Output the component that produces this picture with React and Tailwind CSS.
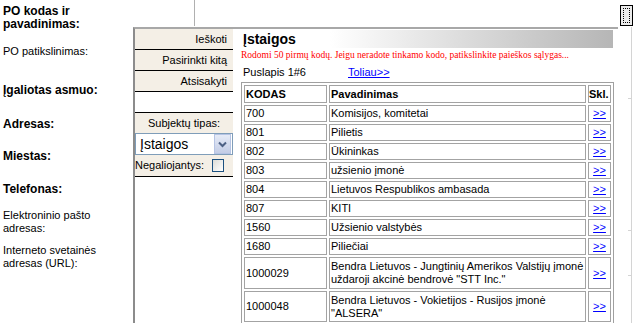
import React from 'react';

const rows = [
    { code: '700', name: 'Komisijos, komitetai' },
    { code: '801', name: 'Pilietis' },
    { code: '802', name: 'Ūkininkas' },
    { code: '803', name: 'užsienio įmonė' },
    { code: '804', name: 'Lietuvos Respublikos ambasada' },
    { code: '807', name: 'KITI' },
    { code: '1560', name: 'Užsienio valstybės' },
    { code: '1680', name: 'Piliečiai' },
    { code: '1000029', name: ['Bendra Lietuvos - Jungtinių Amerikos Valstijų įmonė', 'uždaroji akcinė bendrovė "STT Inc."'], h: 'h-[32px]' },
    { code: '1000048', name: ['Bendra Lietuvos - Vokietijos - Rusijos įmonė', '"ALSERA"'], h: 'h-[31px]' },
];

const SideButton = ({ label }) => (
    <div className="h-[21px] bg-[#f4efe6] border-b border-black flex items-center justify-end pr-[6px] text-[11px]">
        {label}
    </div>
);

const App = () => {
    return (
        <div className="relative w-[634px] h-[323px] overflow-hidden bg-white text-black font-['Liberation_Sans',Arial,sans-serif]">
            {/* underlying form labels */}
            <div className="pl-[3px] pt-[5px] w-[130px]">
                <div className="font-bold text-[12px] leading-[13px]">PO kodas ir<br />pavadinimas:</div>
                <div className="mt-[14px] text-[11px] leading-[13px]">PO patikslinimas:</div>
                <div className="mt-[26px] font-bold text-[12px] leading-[13px]">Įgaliotas asmuo:</div>
                <div className="mt-[21px] font-bold text-[12px] leading-[13px]">Adresas:</div>
                <div className="mt-[19px] font-bold text-[12px] leading-[13px]">Miestas:</div>
                <div className="mt-[20px] font-bold text-[12px] leading-[13px]">Telefonas:</div>
                <div className="mt-[13px] text-[11px] leading-[13px]">Elektroninio pašto<br />adresas:</div>
                <div className="mt-[9px] text-[11px] leading-[13px]">Interneto svetainės<br />adresas (URL):</div>
            </div>

            {/* edges of the form fields behind the popup */}
            <div className="absolute left-[194px] top-0 w-px h-[26px] bg-[#b0b0b0]" />
            <div className="absolute left-[631px] top-[27px] w-px h-[296px] bg-[#d4d4d4]" />
            <div className="absolute left-[628px] top-[98px] w-[3px] h-px bg-[#d4d4d4]" />
            <div className="absolute left-[628px] top-[230px] w-[3px] h-px bg-[#d4d4d4]" />
            <div className="absolute left-[628px] top-[275px] w-[3px] h-px bg-[#d4d4d4]" />

            {/* small "..." button */}
            <div className="absolute left-[620px] top-[5px] w-[13px] h-[21px] border border-black bg-[#ebebeb] p-[2px]">
                <div className="w-full h-full border border-dotted border-black" />
            </div>

            {/* popup */}
            <div className="absolute left-[133px] top-[27px] w-[485px] h-[296px] bg-white border-t-2 border-l-2 border-t-[#a8a8a8] border-l-[#8c8c8c] flex">
                <div className="w-[98px] shrink-0">
                    <SideButton label="Ieškoti" />
                    <SideButton label="Pasirinkti kitą" />
                    <SideButton label="Atsisakyti" />
                    <div className="h-[21px] border-b border-black bg-white" />
                    <div className="bg-[#f4efe6] border-b border-black">
                        <div className="h-[20px] flex items-center justify-center text-[11px]">Subjektų tipas:</div>
                        <div className="h-[22px] bg-white border border-[#7f9db9] flex items-center">
                            <span className="flex-1 pl-[4px] text-[14px] leading-none">Įstaigos</span>
                            <div className="w-[17px] h-[20px] mr-px bg-linear-to-b from-[#e6ebf7] to-[#c3cde6] border border-[#b6c4e4] flex items-center justify-center">
                                <svg width="9" height="7" viewBox="0 0 9 7">
                                    <path d="M1 1.5 L4.5 5 L8 1.5" fill="none" stroke="#4d6185" strokeWidth="2" />
                                </svg>
                            </div>
                        </div>
                        <div className="h-[21px] flex items-center text-[11px]">
                            <span className="flex-1">Negaliojantys:</span>
                            <div className="w-[12px] h-[13px] mr-[9px] border border-[#1c5180] bg-linear-to-br from-[#dcdcd7] to-white" />
                        </div>
                    </div>
                </div>

                <div className="flex-1 pl-[3px] pt-px">
                    <div className="w-[377px] h-[18px] bg-linear-to-r from-white from-25% to-[#b6b6b6] flex items-center pl-[7px]">
                        <span className="font-bold text-[14px] leading-none">Įstaigos</span>
                    </div>
                    <div className="pl-[5px] mt-px h-[12px] leading-[12px] font-['Liberation_Serif',serif] text-[9.5px] text-[#ff0000] whitespace-nowrap">
                        Rodomi 50 pirmų kodų. Jeigu neradote tinkamo kodo, patikslinkite paieškos sąlygas...
                    </div>
                    <div className="pl-[7px] mt-[4px] h-[14px] flex items-center text-[11px]">
                        <span className="w-[105px]">Puslapis 1#6</span>
                        <span className="text-[#0000ff] underline">Toliau&gt;&gt;</span>
                    </div>
                    <table className="ml-[5px] mt-[3px] w-[373px] table-fixed border-separate border-spacing-[2px] border border-[#a0a0a0] text-[11px] leading-[13px]">
                        <thead>
                            <tr>
                                <th className="w-[83px] h-[18px] border border-[#a3a3a3] px-px text-left font-bold">KODAS</th>
                                <th className="w-[257px] border border-[#a3a3a3] px-px text-left font-bold">Pavadinimas</th>
                                <th className="w-[23px] border border-[#a3a3a3] px-0 text-left font-bold">Skl.</th>
                            </tr>
                        </thead>
                        <tbody>
                            {rows.map((r) => (
                                <tr key={r.code}>
                                    <td className={`${r.h || 'h-[17px]'} border border-[#a3a3a3] px-px align-middle`}>{r.code}</td>
                                    <td className="border border-[#a3a3a3] px-px align-middle whitespace-nowrap overflow-hidden">
                                        {Array.isArray(r.name) ? (
                                            <>{r.name[0]}<br />{r.name[1]}</>
                                        ) : r.name}
                                    </td>
                                    <td className="border border-[#a3a3a3] px-0 align-middle text-center">
                                        <span className="text-[#0000ff] underline">&gt;&gt;</span>
                                    </td>
                                </tr>
                            ))}
                        </tbody>
                    </table>
                </div>
            </div>
        </div>
    );
};

export default App;
